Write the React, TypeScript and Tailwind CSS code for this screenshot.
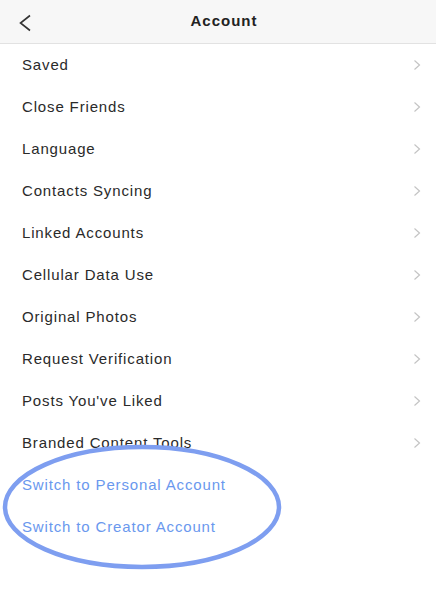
import React from 'react';

const items = [
  'Saved',
  'Close Friends',
  'Language',
  'Contacts Syncing',
  'Linked Accounts',
  'Cellular Data Use',
  'Original Photos',
  'Request Verification',
  "Posts You've Liked",
  'Branded Content Tools',
];

const Chevron = () => (
  <svg width="8" height="12" viewBox="0 0 8 12" fill="none">
    <path d="M1.5 1.5L6.5 6L1.5 10.5" stroke="#c4c4c4" strokeWidth="1.2" />
  </svg>
);

export default function App() {
  return (
    <div
      className="relative w-[436px] h-[596px] bg-white text-[#2a2a2a] overflow-hidden"
      style={{ fontFamily: '"Liberation Sans", Arial, sans-serif' }}
    >
      <div className="relative h-[44px] bg-[#f7f7f7] border-b border-[#e2e2e2] flex items-center justify-center">
        <svg className="absolute left-[18px] top-[14px]" width="14" height="18" viewBox="0 0 14 18" fill="none">
          <path d="M12 1.5L2.5 9L12 16.5" stroke="#333" strokeWidth="1.6" />
        </svg>
        <span className="ml-[12px] text-[15px] font-bold tracking-[1px] text-[#222]">Account</span>
      </div>

      {items.map((label) => (
        <div key={label} className="h-[42px] flex items-center justify-between pl-[22px] pr-[15px]">
          <span className="text-[15px] tracking-[0.85px]">{label}</span>
          <Chevron />
        </div>
      ))}
      <div className="h-[42px] flex items-center pl-[22px]">
        <span className="text-[15px] tracking-[0.85px] text-[#6a98ee]">Switch to Personal Account</span>
      </div>
      <div className="h-[42px] flex items-center pl-[22px]">
        <span className="text-[15px] tracking-[0.85px] text-[#6a98ee]">Switch to Creator Account</span>
      </div>

      <svg className="absolute left-0 top-[440px]" width="290" height="135" viewBox="0 0 290 135" fill="none">
        <ellipse cx="142" cy="67" rx="137" ry="60" stroke="#7e9ef0" strokeWidth="4.5" />
      </svg>
    </div>
  );
}
